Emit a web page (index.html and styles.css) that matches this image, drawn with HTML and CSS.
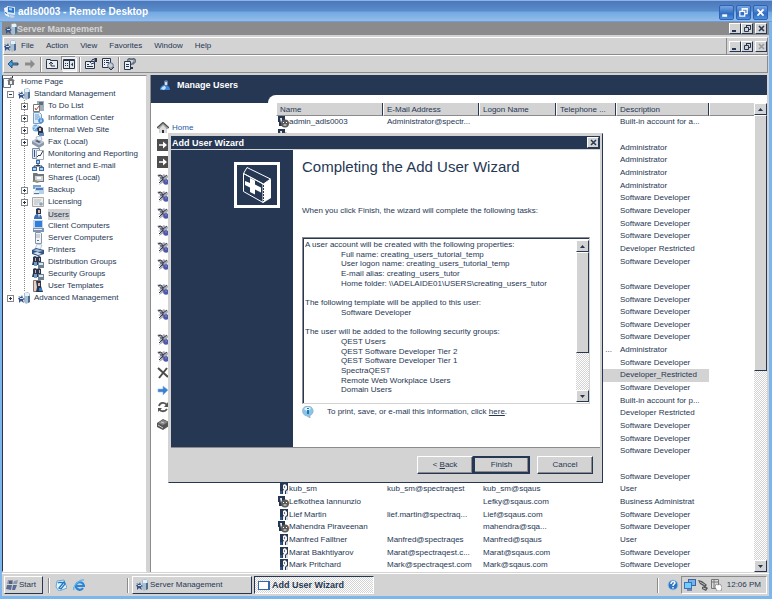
FILE: index.html
```html
<!DOCTYPE html>
<html lang="en">
<head>
<meta charset="utf-8">
<title>adls0003 - Remote Desktop</title>
<link rel="stylesheet" href="styles.css">
</head>
<body>
<svg class="defs" aria-hidden="true">
  <symbol id="server" viewBox="0 0 12 12"><path d="M6 1l4-1 2 2v8l-4 2-2-2z" fill="#a9bdd0"/><path d="M7 1h4v3H7z" fill="#e4f2fb"/><path d="M10 4h2v6l-2 1z" fill="#4f6f91"/><path d="M0 4l3 1 1-2 1 3 2 1-2 1 1 3-3-2-2 2V8L0 6l2-.5z" fill="#35548a"/><path d="M2 6h3v1H2z" fill="#d5e3f3"/></symbol>
  <symbol id="home" viewBox="0 0 12 12"><path d="M1 6l5-5 5 5v1H9.500v4h-7V7H1z" fill="#a5a5a5"/><path d="M0 6l6-5.500L12 6" fill="none" stroke="#4d4d4d" stroke-width="1.300"/><path d="M3 6l3-3 3 3v5H7V8H5v3H3z" fill="#ddd"/><path d="M5 8h2v3H5z" fill="#333"/></symbol>
  <symbol id="homepage" viewBox="0 0 12 12"><path d="M.5 2.500h7v9h-7z" fill="#fff" stroke="#68798c"/><path d="M4 5l4-4 4 4H11v4H5V5z" fill="#777"/><path d="M7 5h2v3H7z" fill="#eee"/><path d="M9 0h1v2H9z" fill="#263753"/></symbol>
  <symbol id="todo" viewBox="0 0 12 12"><path d="M5 1h7v10H5z" fill="#9fb0bc"/><path d="M7 2h4v3H7z" fill="#5d6f7d"/><path d="M1.500 4.500h6v7h-6z" fill="#fff" stroke="#777"/><path d="M3 8l1 2 3-4" fill="none" stroke="#b5443c"/></symbol>
  <symbol id="info-page" viewBox="0 0 12 12"><path d="M1.500.5h6l2 2v9h-8z" fill="#dcecfa" stroke="#7aa0c5"/><path d="M3 3h4M3 5h5M3 7h3" stroke="#6f9bc9"/><circle cx="9" cy="8.500" r="2.800" fill="#4b8ed6"/><path d="M8.500 8h1v2h-1zM8.500 6.500h1v1h-1z" fill="#fff"/></symbol>
  <symbol id="web" viewBox="0 0 12 12"><circle cx="4" cy="4" r="3.500" fill="#68a4de"/><path d="M1 3h6M2 6l4-5" stroke="#d5eafd"/><path d="M5 4l3-2 3 2v3l1 4H6V8z" fill="#263753"/><path d="M7 4h2v3H7z" fill="#e7c3a5"/><path d="M7 9h5v3H7z" fill="#5e87b8"/></symbol>
  <symbol id="fax" viewBox="0 0 12 12"><path d="M4 1l5-1 1 4-5 2z" fill="#eef3fb" stroke="#98a4b4" stroke-width=".7"/><path d="M0 5l4-2 8 3v3l-5 3-7-4z" fill="#8c97ab"/><path d="M0 5l4-2 8 3-5 3z" fill="#bfc8d6"/><path d="M3 5l4 2 2-1-4-2z" fill="#4c5974"/></symbol>
  <symbol id="chart" viewBox="0 0 12 12"><path d="M.5.500h7v10h-7z" fill="#dfe7f3" stroke="#7588a6"/><path d="M2 2h1v7H2z" fill="#31568f"/><path d="M4.500 2.500h7v9h-7z" fill="#fff" stroke="#a1a9b5"/><path d="M5 9l2-2 1 1 3-5" fill="none" stroke="#263753"/></symbol>
  <symbol id="network" viewBox="0 0 12 12"><path d="M4 0h4v4H4z" fill="#406aa7"/><path d="M5 1h2v2H5z" fill="#9fd0fa"/><path d="M6 4v2M2 8V6h8v2" fill="none" stroke="#263753"/><path d="M0 7h5v4H0zM7 7h5v4H7z" fill="#3d66a5"/><path d="M1 8h3v2H1zM8 8h3v2H8z" fill="#a6d5fb"/><path d="M4 5h4v1H4z" fill="#333"/></symbol>
  <symbol id="share" viewBox="0 0 12 12"><path d="M1 1h4l1 1h6v8H1z" fill="#70777d"/><path d="M3 4h8v5H3z" fill="#cfd3d5"/><path d="M0 9l4-1 4 2-3 1z" fill="#9b9185"/><path d="M5 5h4v2H5z" fill="#fff"/></symbol>
  <symbol id="backup" viewBox="0 0 12 12"><path d="M1 1h8v4H1z" fill="#7ca3cf"/><path d="M3 3h9v7H3z" fill="#b9d0e9"/><path d="M4 4h7v2H4z" fill="#4f7cb4"/><path d="M1 7h6v4H1z" fill="#e7eef6"/><path d="M2 9h5v1H2z" fill="#56739a"/></symbol>
  <symbol id="license" viewBox="0 0 12 12"><path d="M.5 1.500h11v9H.5z" fill="#ededed" stroke="#aaa"/><path d="M2 4h7M2 6h6M2 8h4" stroke="#b3bac2"/><circle cx="9" cy="8" r="1.800" fill="#8fa5b9"/></symbol>
  <symbol id="user" viewBox="0 0 12 12"><path d="M4 1l2-1 3 1v5H4z" fill="#263753"/><path d="M6 2h2v3H6z" fill="#e0b6a2"/><path d="M2 11c0-4 2-5 4-5s4 1 4 5z" fill="#3a6fb2"/><path d="M6 6h2l-1 4z" fill="#e5eef8"/></symbol>
  <symbol id="user-light" viewBox="0 0 12 12"><path d="M5 2l2-1 2 1v4H5z" fill="#5d7fb0"/><path d="M6 3h2v3H6z" fill="#f2d7c8"/><path d="M1 11c0-3 2-5 5-5s5 2 5 5z" fill="#3f88d8"/><path d="M2 10c1-2 2-3 4-3l1 2-2 2z" fill="#c5e2fb"/></symbol>
  <symbol id="pc" viewBox="0 0 12 12"><path d="M1 0h10v9H1z" fill="#c3d5ea"/><path d="M3 1h7v6H3z" fill="#2f7fdb"/><path d="M1 8h11v4H1z" fill="#8095b4"/><path d="M2 9h8v1H2z" fill="#edf1f5"/></symbol>
  <symbol id="tower" viewBox="0 0 12 12"><path d="M3.500.5h5l1 1v10h-6z" fill="#f2f5f7" stroke="#8795a2"/><path d="M4 3h4M4 5h4" stroke="#a4afba"/><path d="M5 8h2v1H5z" fill="#4f7192"/></symbol>
  <symbol id="printer" viewBox="0 0 12 12"><path d="M5 0l5 1-2 5-5-1z" fill="#eef5fd" stroke="#92a7bf" stroke-width=".6"/><path d="M0 6l4-2 8 2v4l-6 2-6-2z" fill="#33527f"/><path d="M1 6l4-1 6 2-5 1z" fill="#a8bfda"/><path d="M1 9l5 2 4-1-5-2z" fill="#d8e5f3"/></symbol>
  <symbol id="group" viewBox="0 0 12 12"><path d="M1 1l2-1 2 1 2-1 2 1v4l1 4H0l1-4z" fill="#263753"/><path d="M3 2h1v3H3zM7 2h1v3H7z" fill="#d7ad9b"/><path d="M2 6h3v4H2z" fill="#6f9bc6"/><path d="M6 6h6v6H6z" fill="#6e8193"/><path d="M7 7h4v2H7z" fill="#dbe6ee"/></symbol>
  <symbol id="template" viewBox="0 0 12 12"><path d="M1.500.500h7v11h-7z" fill="#e7cfc4" stroke="#8b6f6b"/><path d="M4 1h5v5l2 6H4l1-5z" fill="#263753"/><path d="M6 3h2v3H6z" fill="#e4b7a5"/><path d="M7 8h3v3H7z" fill="#407dbc"/></symbol>
  <symbol id="row-user" viewBox="0 0 12 12"><path d="M3 0h8v11H3z" fill="#263753"/><path d="M6 2l2-1 2 2v3L8 8v3H6V8l1-2H6z" fill="#f4f4f4"/><path d="M7 3h1v2H7z" fill="#777"/><path d="M9 8l2-1v4H9z" fill="#d5d9e0"/><path d="M3 8h2v3H3z" fill="#2e5c99"/></symbol>
  <symbol id="row-user-off" viewBox="0 0 12 12"><path d="M1 0h7v4L6 10H2V6H1z" fill="#263753"/><path d="M3 2h2v5H4z" fill="#e6e6e6"/><circle cx="8" cy="7.500" r="4" fill="#5a5a5a"/><path d="M6 6h1v1H6zM9 6h1v1H9zM6.500 8.500h3v1h-3z" fill="#fff"/></symbol>
  <symbol id="task" viewBox="0 0 12 12"><path d="M0 2l3-1 1 2 3-2 2 2 3-1-2 4 1 3H7l-5 3 2-4-3-1 3-1z" fill="#a9acb6"/><path d="M1 3l3-1 2 3 4-3M6 6l-4 4M3 5h3v3" fill="none" stroke="#343a4e"/><circle cx="9" cy="9" r="2.800" fill="#4e57a8"/><path d="M8.500 7.500h1v1h-1z" fill="#b7bdf0"/></symbol>
  <symbol id="go" viewBox="0 0 12 12"><path d="M0 0h12v12H0z" fill="#4d4d4d"/><path d="M2 5.200h4V2.500L10 6 6 9.500V6.800H2z" fill="#fff"/></symbol>
  <symbol id="delete" viewBox="0 0 12 12"><path d="M1 1l10 9M10 1L2 11" stroke="#4b4d48" stroke-width="2"/></symbol>
  <symbol id="move" viewBox="0 0 12 12"><path d="M1 5h5V2l5 4-5 5V8H1z" fill="#3b80cf" stroke="#8bb9ee" stroke-width=".6"/></symbol>
  <symbol id="refresh" viewBox="0 0 12 12"><path d="M2 5c1-4 6-4 8-1M10 8c-2 3-6 3-8 0" fill="none" stroke="#555" stroke-width="1.800"/><path d="M11 1v5H7zM1 11V7h4z" fill="#555"/></symbol>
  <symbol id="device" viewBox="0 0 12 12"><path d="M0 5l6-4 6 3v4l-6 4-6-3z" fill="#555"/><path d="M1 5l5-3 5 2-5 3z" fill="#8c8889"/><path d="M4 4l3 1M1 7l5 3" stroke="#ccc"/></symbol>
  <symbol id="remote" viewBox="0 0 12 12"><path d="M3 0l8 1v8l-8-1z" fill="#d7e6f5"/><path d="M4 1l6 1v5l-6-1z" fill="#2e74c9"/><path d="M5 2l3 .5v2L5 4z" fill="#9bd0fa"/><path d="M0 2l3-1v7l2 1v2L1 9z" fill="#eef5fc"/><path d="M6 9l5 1-2 2-4-1z" fill="#c5d4e4"/><path d="M1 6l2 1v1L1 7z" fill="#36537d"/></symbol>
  <symbol id="left" viewBox="0 0 12 12"><path d="M1 6l4-4v3h6v2H5v3z" fill="#36a0e8" stroke="#263753" stroke-width=".8"/></symbol>
  <symbol id="right" viewBox="0 0 12 12"><path d="M11 6L6.500 1.500v3H1v3h5.500v3z" fill="#8b8b8b"/></symbol>
  <symbol id="up-folder" viewBox="0 0 12 12"><path d="M.500 2.500v-1h4v1h7v8H.500z" fill="#ececec" stroke="#263753"/><path d="M3 6l2-2 2 2M5 4v4h4" fill="none" stroke="#263753"/></symbol>
  <symbol id="panes" viewBox="0 0 12 12"><path d="M.500 1.500h11v9H.500z" fill="#e7e7e7" stroke="#263753"/><path d="M1 2.500h10M6.500 2v8M2 5.500h1M4 5.500h1M2 7.500h1M4 7.500h1" stroke="#263753"/><path d="M8 6.500l2-2v4z" fill="#263753"/></symbol>
  <symbol id="props" viewBox="0 0 12 12"><path d="M.500 3.500h9v7h-9z" fill="#eee" stroke="#263753"/><path d="M2 6.500h2M2 8.500h6M5 5l3-4 3 2-2 2-3 1" fill="none" stroke="#263753"/><path d="M9 0h3v4h-1z" fill="#263753"/></symbol>
  <symbol id="export" viewBox="0 0 12 12"><path d="M.500.500h8v9h-8z" fill="#eee" stroke="#263753"/><path d="M2 2.500h1M4 2.500h3M2 4.500h1M4 4.500h3M2 6.500h1" stroke="#263753"/><circle cx="8.500" cy="7.500" r="2.800" fill="#ccc" stroke="#526d91"/><path d="M7 10l2 2 3-3" fill="none" stroke="#263753"/></symbol>
  <symbol id="help" viewBox="0 0 12 12"><path d="M.500 3.500h6v8h-6z" fill="#eee" stroke="#263753"/><path d="M2 6.500h3M2 8.500h3" stroke="#263753"/><path d="M4 3c0-3 7-3 7 0 0 2-3 2-3 4" fill="none" stroke="#263753" stroke-width="2"/><path d="M4 3c0-3 7-3 7 0 0 2-3 2-3 4" fill="none" stroke="#e6e6e6" stroke-width=".700"/><path d="M7 9h2v2H7z" fill="#263753"/></symbol>
  <symbol id="flag" viewBox="0 0 12 12"><path d="M2 1h5v4H1zM8 2l4-1-1 4H7z" fill="#8b98b5"/><path d="M1 6h5l-1 5-5-1zM7 6h4l-2 5H6z" fill="#596c94"/><path d="M3 2h3v3H3z" fill="#5c5f67"/></symbol>
  <symbol id="desk" viewBox="0 0 12 12"><path d="M2 2l7-1 3 8-8 3-3-4z" fill="#e2f4ff" stroke="#6aa6d5"/><path d="M3 4c2-2 4 1 6-1M4 9l5-6 1 2-4 5z" fill="none" stroke="#2279c2" stroke-width="1.300"/></symbol>
  <symbol id="ie" viewBox="0 0 12 12"><path d="M10 9c-2 3-7 2-7-2 0-5 7-5 8 0H4" fill="none" stroke="#2986d8" stroke-width="2.200"/><path d="M1 11C-1 7 7 0 11 1" fill="none" stroke="#61b4ee" stroke-width="1.300"/></symbol>
  <symbol id="help-ball" viewBox="0 0 12 12"><circle cx="6" cy="6" r="5" fill="#2f76c2" stroke="#a6c8ec"/><path d="M4 5c0-3 4-3 4-1 0 1-2 1-2 3M6 8v1.500" fill="none" stroke="#fff" stroke-width="1.400"/></symbol>
  <symbol id="screens" viewBox="0 0 12 12"><path d="M4 0h8v7H4z" fill="#46619b"/><path d="M5 1h6v5H5z" fill="#69b6f2"/><path d="M0 3h8v7H0z" fill="#3e71bc"/><path d="M1 4h6v5H1z" fill="#72cdfa"/><path d="M3 10h5v2H3z" fill="#7784a6"/></symbol>
  <symbol id="plug" viewBox="0 0 12 12"><path d="M1 1l4 1 5 4-2 2-5-3zM5 8l3-1 3 2-2 3-4-2z" fill="#555"/><path d="M3 3l5 3M6 9l3 1" stroke="#bbb"/></symbol>
  <symbol id="updates" viewBox="0 0 12 12"><path d="M1.500.500h7v9h-7z" fill="#ddd" stroke="#777"/><path d="M1 3h7M4 1v9" stroke="#777"/><path d="M6 5l2 1 2-1 2 3-1 4H7L5 8z" fill="#fff" stroke="#666" stroke-width=".600"/></symbol>
  <symbol id="balloon" viewBox="0 0 12 12"><path d="M6 0a5.500 5 0 0 1 2 9.500V12L5 10A5 5 0 0 1 6 0z" fill="#86c5ea" stroke="#9cabb9" stroke-width=".7"/><path d="M2 3c1-2 4-3 7-1L6 6z" fill="#e2f5ff"/><path d="M5 4h2v4H5zM5 2h2v1H5z" fill="#2373bd"/></symbol>
  <symbol id="kit" viewBox="0 0 36 36"><path d="M4.500 6.500L8 .500l23.500 11.500-7 5zM4.500 6.500v18L24 35.500V17z" fill="#263753" stroke="#fff"/><path d="M24 17l8-5v19l-8 5z" fill="#fff"/><path d="M24.500 18v16" stroke="#263753" stroke-dasharray="2 1"/><path d="M11 11l5 2.500v4l6 3v5l-6-3v5l-5-2.500v-4.500l-5-2.500v-4l5 2z" fill="#fff"/></symbol>
  <symbol id="min" viewBox="0 0 9 9"><path d="M1 6h4v2H1z" fill="currentColor"/></symbol>
  <symbol id="restore" viewBox="0 0 9 9"><path d="M3.500 3V1.500h4v4H6M1.500 3.500h4v4h-4z" fill="none" stroke="currentColor"/><path d="M3 1h5v1H3z" fill="currentColor"/></symbol>
  <symbol id="close" viewBox="0 0 9 9"><path d="M2 2l5 5M7 2L2 7" stroke="currentColor" stroke-width="1.500"/></symbol>
  <symbol id="tri-up" viewBox="0 0 9 9"><path d="M2 6l2.500-3L7 6z" fill="currentColor"/></symbol>
  <symbol id="tri-down" viewBox="0 0 9 9"><path d="M2 3h5L4.500 6z" fill="currentColor"/></symbol>
</svg>

<header class="rdp-title">
  <svg class="icon"><use href="#remote"/></svg><h1>adls0003 - Remote Desktop</h1>
  <button class="xp" aria-label="Minimize"><svg><use href="#min"/></svg></button><button class="xp" aria-label="Restore"><svg><use href="#restore"/></svg></button><button class="xp" aria-label="Close"><svg><use href="#close"/></svg></button>
</header>
<div class="session">
  <div class="app-title"><svg class="icon"><use href="#server"/></svg><h2>Server Management</h2>
    <button class="cap" aria-label="Minimize"><svg><use href="#min"/></svg></button><button class="cap" aria-label="Restore"><svg><use href="#restore"/></svg></button><button class="cap apart" aria-label="Close"><svg><use href="#close"/></svg></button>
  </div>
  <nav class="menubar"><svg class="icon"><use href="#server"/></svg>
    <button>File</button><button>Action</button><button>View</button><button>Favorites</button><button>Window</button><button>Help</button>
    <div class="child-caps"><button class="cap" aria-label="Minimize window"><svg><use href="#min"/></svg></button><button class="cap" aria-label="Restore window"><svg><use href="#restore"/></svg></button><button class="cap apart off" aria-label="Close window" disabled><svg><use href="#close"/></svg></button></div>
  </nav>
  <div class="toolbar">
    <button aria-label="Back"><svg class="icon"><use href="#left"/></svg></button><button aria-label="Forward"><svg class="icon"><use href="#right"/></svg></button><i></i>
    <button aria-label="Up one level"><svg class="icon"><use href="#up-folder"/></svg></button><button class="pressed" aria-label="Show tree"><svg class="icon"><use href="#panes"/></svg></button><i></i>
    <button aria-label="Properties"><svg class="icon"><use href="#props"/></svg></button><button aria-label="Export list"><svg class="icon"><use href="#export"/></svg></button><i></i>
    <button aria-label="Help"><svg class="icon"><use href="#help"/></svg></button>
  </div>

  <div class="workspace">
    <ul class="tree">
      <li class="root"><svg class="icon"><use href="#homepage"/></svg><span>Home Page</span></li>
      <li class="top"><b class="minus"></b><svg class="icon"><use href="#server"/></svg><span>Standard Management</span></li>
      <li><b></b><svg class="icon"><use href="#todo"/></svg><span>To Do List</span></li>
      <li><b></b><svg class="icon"><use href="#info-page"/></svg><span>Information Center</span></li>
      <li><b></b><svg class="icon"><use href="#web"/></svg><span>Internal Web Site</span></li>
      <li><b></b><svg class="icon"><use href="#fax"/></svg><span>Fax (Local)</span></li>
      <li class="leaf"><svg class="icon"><use href="#chart"/></svg><span>Monitoring and Reporting</span></li>
      <li class="leaf"><svg class="icon"><use href="#network"/></svg><span>Internet and E-mail</span></li>
      <li class="leaf"><svg class="icon"><use href="#share"/></svg><span>Shares (Local)</span></li>
      <li><b></b><svg class="icon"><use href="#backup"/></svg><span>Backup</span></li>
      <li><b></b><svg class="icon"><use href="#license"/></svg><span>Licensing</span></li>
      <li class="leaf"><svg class="icon"><use href="#user"/></svg><span class="current">Users</span></li>
      <li class="leaf"><svg class="icon"><use href="#pc"/></svg><span>Client Computers</span></li>
      <li class="leaf"><svg class="icon"><use href="#tower"/></svg><span>Server Computers</span></li>
      <li class="leaf"><svg class="icon"><use href="#printer"/></svg><span>Printers</span></li>
      <li class="leaf"><svg class="icon"><use href="#group"/></svg><span>Distribution Groups</span></li>
      <li class="leaf"><svg class="icon"><use href="#group"/></svg><span>Security Groups</span></li>
      <li class="leaf"><svg class="icon"><use href="#template"/></svg><span>User Templates</span></li>
      <li class="top"><b></b><svg class="icon"><use href="#server"/></svg><span>Advanced Management</span></li>
    </ul>

    <main class="users">
      <div class="banner"><svg class="icon"><use href="#user-light"/></svg><h2>Manage Users</h2></div>
      <div class="panel">
        <div class="actions">
          <a href="#"><svg class="icon"><use href="#home"/></svg>Home</a>
          <a href="#" aria-label="Action"><svg class="icon"><use href="#go"/></svg></a>
          <a href="#" aria-label="Action"><svg class="icon"><use href="#go"/></svg></a>
          <a href="#" aria-label="Task"><svg class="icon"><use href="#task"/></svg></a>
          <a href="#" aria-label="Task"><svg class="icon"><use href="#task"/></svg></a>
          <a href="#" aria-label="Task"><svg class="icon"><use href="#task"/></svg></a>
          <a href="#" aria-label="Task"><svg class="icon"><use href="#task"/></svg></a>
          <a href="#" aria-label="Task"><svg class="icon"><use href="#task"/></svg></a>
          <a href="#" class="tall" aria-label="Task"><svg class="icon"><use href="#task"/></svg></a>
          <a href="#" class="tall" aria-label="Task"><svg class="icon"><use href="#task"/></svg></a>
          <a href="#" class="tall" aria-label="Task"><svg class="icon"><use href="#task"/></svg></a>
          <a href="#" aria-label="Task"><svg class="icon"><use href="#task"/></svg></a>
          <a href="#" aria-label="Task"><svg class="icon"><use href="#task"/></svg></a>
          <a href="#" aria-label="Delete"><svg class="icon"><use href="#delete"/></svg></a>
          <a href="#" aria-label="Move"><svg class="icon"><use href="#move"/></svg></a>
          <a href="#" aria-label="Refresh"><svg class="icon"><use href="#refresh"/></svg></a>
          <a href="#" aria-label="Print"><svg class="icon"><use href="#device"/></svg></a>
        </div>
        <div class="list">
          <table>
            <colgroup><col class="c-name"><col class="c-mail"><col class="c-logon"><col class="c-phone"><col class="c-desc"><col></colgroup>
            <thead><tr><th>Name</th><th>E-Mail Address</th><th>Logon Name</th><th>Telephone ...</th><th>Description</th><th></th></tr></thead>
            <tbody>
              <tr><td><svg class="icon"><use href="#row-user-off"/></svg>admin_adls0003</td><td>Administrator@spectr...</td><td></td><td></td><td>Built-in account for a...</td><td></td></tr>
              <tr><td><svg class="icon"><use href="#row-user-off"/></svg></td><td></td><td></td><td></td><td></td><td></td></tr>
              <tr><td></td><td></td><td></td><td></td><td>Administrator</td><td></td></tr>
              <tr><td></td><td></td><td></td><td></td><td>Administrator</td><td></td></tr>
              <tr><td></td><td></td><td></td><td></td><td>Administrator</td><td></td></tr>
              <tr><td></td><td></td><td></td><td></td><td>Administrator</td><td></td></tr>
              <tr><td></td><td></td><td></td><td></td><td>Software Developer</td><td></td></tr>
              <tr><td></td><td></td><td></td><td></td><td>Software Developer</td><td></td></tr>
              <tr><td></td><td></td><td></td><td></td><td>Software Developer</td><td></td></tr>
              <tr><td></td><td></td><td></td><td></td><td>Software Developer</td><td></td></tr>
              <tr><td></td><td></td><td></td><td></td><td>Developer Restricted</td><td></td></tr>
              <tr><td></td><td></td><td></td><td></td><td>Software Developer</td><td></td></tr>
              <tr><td></td><td></td><td></td><td></td><td></td><td></td></tr>
              <tr><td></td><td></td><td></td><td></td><td>Software Developer</td><td></td></tr>
              <tr><td></td><td></td><td></td><td></td><td>Software Developer</td><td></td></tr>
              <tr><td></td><td></td><td></td><td></td><td>Software Developer</td><td></td></tr>
              <tr><td></td><td></td><td></td><td></td><td>Software Developer</td><td></td></tr>
              <tr><td></td><td></td><td></td><td></td><td>Software Developer</td><td></td></tr>
              <tr><td></td><td></td><td></td><td class="more">...</td><td>Administrator</td><td></td></tr>
              <tr><td></td><td></td><td></td><td></td><td>Software Developer</td><td></td></tr>
              <tr class="selected"><td></td><td></td><td></td><td></td><td>Developer_Restricted</td><td></td></tr>
              <tr><td></td><td></td><td></td><td></td><td>Software Developer</td><td></td></tr>
              <tr><td></td><td></td><td></td><td></td><td>Built-in account for p...</td><td></td></tr>
              <tr><td></td><td></td><td></td><td></td><td>Developer Restricted</td><td></td></tr>
              <tr><td></td><td></td><td></td><td></td><td>Software Developer</td><td></td></tr>
              <tr><td></td><td></td><td></td><td></td><td>Software Developer</td><td></td></tr>
              <tr><td></td><td></td><td></td><td></td><td>Software Developer</td><td></td></tr>
              <tr><td></td><td></td><td></td><td></td><td></td><td></td></tr>
              <tr><td></td><td></td><td></td><td></td><td>Software Developer</td><td></td></tr>
              <tr><td><svg class="icon"><use href="#row-user"/></svg>kub_sm</td><td>kub_sm@spectraqest</td><td>kub_sm@sqaus</td><td></td><td>User</td><td></td></tr>
              <tr><td><svg class="icon"><use href="#row-user-off"/></svg>Lefkothea Iannunzio</td><td></td><td>Lefky@sqaus.com</td><td></td><td>Business Administrat</td><td></td></tr>
              <tr><td><svg class="icon"><use href="#row-user"/></svg>Lief Martin</td><td>lief.martin@spectraq...</td><td>Lief@sqaus.com</td><td></td><td>Software Developer</td><td></td></tr>
              <tr><td><svg class="icon"><use href="#row-user-off"/></svg>Mahendra Piraveenan</td><td></td><td>mahendra@sqa...</td><td></td><td>Software Developer</td><td></td></tr>
              <tr><td><svg class="icon"><use href="#row-user"/></svg>Manfred Falltner</td><td>Manfred@spectraqes</td><td>Manfred@sqaus</td><td></td><td>User</td><td></td></tr>
              <tr><td><svg class="icon"><use href="#row-user"/></svg>Marat Bakhtiyarov</td><td>Marat@spectraqest.c...</td><td>Marat@sqaus.com</td><td></td><td>Software Developer</td><td></td></tr>
              <tr><td><svg class="icon"><use href="#row-user"/></svg>Mark Pritchard</td><td>Mark@spectraqest.com</td><td>Mark@sqaus.com</td><td></td><td>Software Developer</td><td></td></tr>
            </tbody>
          </table>
        </div>
        <div class="scroll"><button aria-label="Scroll up"><svg><use href="#tri-up"/></svg></button><div class="thumb"></div><div class="track"></div><button aria-label="Scroll down"><svg><use href="#tri-down"/></svg></button></div>
      </div>
    </main>
  </div>

  <footer class="taskbar">
    <button class="start"><svg class="icon"><use href="#flag"/></svg>Start</button><i></i>
    <button class="quick" aria-label="Show desktop"><svg class="icon"><use href="#desk"/></svg></button><button class="quick" aria-label="Internet Explorer"><svg class="icon"><use href="#ie"/></svg></button><i class="far"></i>
    <button class="task"><svg class="icon"><use href="#server"/></svg>Server Management</button>
    <button class="task active"><span class="window-glyph"></span>Add User Wizard</button>
    <i class="end"></i><svg class="icon"><use href="#help-ball"/></svg>
    <div class="tray"><svg class="icon"><use href="#screens"/></svg><svg class="icon"><use href="#plug"/></svg><svg class="icon"><use href="#updates"/></svg><time>12:06 PM</time></div>
  </footer>
</div>

<section class="dialog" role="dialog" aria-labelledby="wizard-name">
  <header><h2 id="wizard-name">Add User Wizard</h2><button class="cap" aria-label="Close wizard"><svg><use href="#close"/></svg></button></header>
  <div class="page">
    <div class="art"><svg><use href="#kit"/></svg></div>
    <div class="content">
      <h3>Completing the Add User Wizard</h3>
      <p>When you click Finish, the wizard will complete the following tasks:</p>
      <div class="summary">
        <div class="lines">
          <span>A user account will be created with the following properties:</span>
          <span class="sub">Full name: creating_users_tutorial_temp</span>
          <span class="sub">User logon name: creating_users_tutorial_temp</span>
          <span class="sub">E-mail alias: creating_users_tutor</span>
          <span class="sub">Home folder: \\ADELAIDE01\USERS\creating_users_tutor</span>
          <span></span>
          <span>The following template will be applied to this user:</span>
          <span class="sub">Software Developer</span>
          <span></span>
          <span>The user will be added to the following security groups:</span>
          <span class="sub">QEST Users</span>
          <span class="sub">QEST Software Developer Tier 2</span>
          <span class="sub">QEST Software Developer Tier 1</span>
          <span class="sub">SpectraQEST</span>
          <span class="sub">Remote Web Workplace Users</span>
          <span class="sub">Domain Users</span>
        </div>
        <div class="scroll"><button aria-label="Scroll summary up"><svg><use href="#tri-up"/></svg></button><div class="thumb"></div><div class="track"></div><button aria-label="Scroll summary down"><svg><use href="#tri-down"/></svg></button></div>
      </div>
      <div class="hint"><svg class="icon"><use href="#balloon"/></svg><span>To print, save, or e-mail this information, click <a href="#">here</a>.</span></div>
    </div>
  </div>
  <div class="buttons"><button>&lt; <u>B</u>ack</button><button class="default">Finish</button><button class="cancel">Cancel</button></div>
</section>
</body>
</html>
```
FILE: styles.css
```css
:root {
  --navy: #263753;
  --face: #d3d3d3;
  --shade: #8b8b8d;
  --checker: repeating-conic-gradient(#fff 0 25%, #d3d3d3 0 50%) 0 0 / 2px 2px;
}
* { box-sizing: border-box; }
html, body { height: 100%; }
body {
  margin: 0;
  display: flex;
  flex-direction: column;
  overflow: hidden;
  position: relative;
  background: #7db6ec;
  color: var(--navy);
  font: 8px/12px "Liberation Sans", sans-serif;
}
button { font: inherit; color: inherit; border: 0; padding: 0; margin: 0; background: none; }
h1, h2, h3, p, ul { margin: 0; padding: 0; }
h1, h2 { font-size: 9px; line-height: 12px; font-weight: bold; }
.defs { position: absolute; width: 0; height: 0; }
.icon { width: 12px; height: 12px; flex: none; display: block; }

/* Outer window */
.rdp-title {
  height: 22px;
  flex: none;
  display: flex;
  align-items: center;
  gap: 2px;
  padding: 2px 4px 0 4px;
  background: linear-gradient(#8db5ec 0 1px, #4c78ba 1px, #5a8ccb 50%, #72a9e2 55%, #94bce9 21px, #6c9dd9 21px);
  color: #fff;
}
.rdp-title h1 { flex: 1; font-size: 10px; }
.xp {
  width: 15px;
  height: 15px;
  display: grid;
  place-items: center;
  border: 1px solid #2e62b4;
  border-radius: 2px;
  background: linear-gradient(#77a5e2, #2f6cc0 60%, #4e90dc);
}
.xp svg { width: 11px; height: 11px; }
.session {
  flex: 1;
  min-height: 0;
  display: flex;
  flex-direction: column;
  margin: 0 3px 3px 2px;
  background: var(--face);
}

/* Console caption and menus */
.app-title {
  flex: none;
  height: 13px;
  display: flex;
  align-items: center;
  padding: 0 2px 0 3px;
  background: var(--shade);
  color: #d6d6d6;
}
.app-title h2 { flex: 1; }
.cap {
  width: 12px;
  height: 11px;
  display: grid;
  place-items: center;
  color: var(--navy);
  background: var(--face);
  border: 1px solid;
  border-color: #fff var(--navy) var(--navy) #fff;
}
.cap svg { width: 9px; height: 9px; }
.cap.apart { margin-left: 2px; }
.cap.off { color: #999; }
.menubar, .toolbar {
  flex: none;
  display: flex;
  align-items: center;
  margin: 0 1px;
  border: 1px solid;
  border-color: #fff var(--shade) var(--shade) #fff;
}
.menubar { height: 18px; margin-top: 2px; gap: 12px; }
.menubar .icon { margin-right: -7px; }
.child-caps {
  align-self: stretch;
  display: flex;
  align-items: center;
  margin-left: auto;
  padding-left: 2px;
  border-left: 1px solid var(--shade);
}
.toolbar { height: 18px; padding-left: 2px; gap: 3px; }
.toolbar button { height: 14px; width: 14px; display: grid; place-items: center; }
.toolbar button.pressed { background: #eee; box-shadow: -1px -1px var(--shade), 1px 1px #fff; }
.toolbar i { width: 2px; height: 15px; border-left: 1px solid var(--shade); border-right: 1px solid #fff; }

/* Workspace */
.workspace { flex: 1; min-height: 0; display: flex; margin-top: 2px; gap: 3px; }
.tree {
  flex: none;
  width: 145px;
  background: #fff;
  list-style: none;
  border: 1px solid;
  border-color: var(--shade) var(--face) #fff var(--navy);
  white-space: nowrap;
}
.tree li {
  height: 12px;
  display: flex;
  align-items: center;
  gap: 4px;
  padding-left: 18px;
  background:
    repeating-linear-gradient(#888 0 1px, transparent 1px 2px) 7px 0 / 1px 100% no-repeat,
    repeating-linear-gradient(#888 0 1px, transparent 1px 2px) 21px 0 / 1px 100% no-repeat;
}
.tree li.root { padding-left: 0; background: none; }
.tree li.root span { padding-left: 2px; }
.tree li.top { padding-left: 4px; background: none; }
.tree li.leaf { padding-left: 29px; }
.tree span { padding: 0 1px 0 0; }
.tree .current { background: var(--face); line-height: 11px; }
.tree b {
  width: 7px;
  height: 7px;
  border: 1px solid #888;
  background:
    linear-gradient(var(--navy), var(--navy)) center / 3px 1px no-repeat,
    linear-gradient(var(--navy), var(--navy)) center / 1px 3px no-repeat, #fff;
}
.tree b.minus { background: linear-gradient(var(--navy), var(--navy)) center / 3px 1px no-repeat, #fff; }

.users { flex: 1; min-width: 0; display: flex; flex-direction: column; background: #fff; border-left: 1px solid var(--shade); margin-right: 2px; }
.banner {
  flex: none;
  height: 28px;
  display: flex;
  align-items: center;
  gap: 6px;
  padding: 0 0 8px 8px;
  background: var(--navy);
  color: #fff;
}
.panel { flex: 1; min-height: 0; display: flex; position: relative; }
.panel::before {
  content: "";
  position: absolute;
  top: -8px;
  left: 117px;
  right: 0;
  height: 8px;
  background: #fff;
  border-top-left-radius: 8px;
}
.actions { flex: none; width: 125px; padding: 16px 0 0 6px; }
.actions a { height: 17px; display: flex; align-items: center; gap: 3px; color: #2457a4; text-decoration: none; }
.actions a.tall { height: 25px; align-items: flex-start; padding-top: 3px; }
.list { flex: 1; min-width: 0; }
table { width: 100%; height: 100%; table-layout: fixed; border-collapse: separate; border-spacing: 0; white-space: nowrap; }
.c-name { width: 107px; } .c-mail { width: 96px; } .c-logon { width: 77px; } .c-phone { width: 60px; } .c-desc { width: 93px; }
th {
  height: 13px;
  padding: 0 0 0 3px;
  text-align: left;
  font-weight: normal;
  line-height: 11px;
  background: var(--face);
  border-right: 1px solid var(--navy);
  border-bottom: 1px solid var(--shade);
  border-left: 1px solid #fff;
}
th:last-child { border-right: 0; }
td { height: 12px; padding: 0 0 0 4px; line-height: 12px; overflow: hidden; }
td:first-child { padding-left: 1px; }
td .icon { float: left; }
td.more { text-align: right; padding-right: 4px; }
.selected td:nth-child(-n+5) { background: var(--face); }

.scroll { flex: none; width: 13px; display: flex; flex-direction: column; }
.scroll button, .thumb {
  flex: none;
  display: grid;
  place-items: center;
  height: 12px;
  background: var(--face);
  border: 1px solid;
  border-color: #fff var(--navy) var(--navy) #fff;
}
.scroll svg { width: 9px; height: 9px; }
.panel .thumb { flex: 62; }
.track { flex: 46; background: var(--checker); }

/* Taskbar */
.taskbar {
  flex: none;
  height: 23px;
  display: flex;
  align-items: center;
  gap: 2px;
  margin-top: 1px;
  padding: 0 2px;
  border-top: 1px solid #fff;
}
.taskbar > button, .tray { height: 18px; display: flex; align-items: center; }
.start, .task { border: 1px solid; border-color: #fff var(--navy) var(--navy) #fff; }
.start { width: 39px; padding-left: 1px; gap: 1px; }
.taskbar i { width: 2px; height: 15px; margin: 0 3px; border-left: 1px solid var(--shade); border-right: 1px solid #fff; }
.quick { margin-right: 4px; }
.taskbar i.far { margin: 0 1px 0 36px; }
.taskbar i.end { margin: 0 6px 0 auto; }
.task { width: 120px; padding-left: 3px; gap: 2px; }
.task.active {
  background: var(--checker);
  border-color: var(--navy) #fff #fff var(--navy);
  font-size: 9px;
  font-weight: bold;
}
.window-glyph { width: 12px; height: 9px; background: #fff; border: 1px solid #3568ab; border-right-width: 2px; }
.tray { gap: 1px; padding: 0 5px 0 2px; border: 1px solid; border-color: var(--shade) #fff #fff var(--shade); }
.tray time { margin-left: 4px; }

/* Wizard */
.dialog {
  position: absolute;
  left: 168px;
  top: 133px;
  width: 435px;
  padding: 2px;
  background: var(--face);
  border: 1px solid;
  border-color: var(--face) var(--navy) var(--navy) var(--face);
}
.dialog header { height: 13px; display: flex; align-items: center; padding: 0 1px; background: var(--navy); color: #fff; }
.dialog header h2 { flex: 1; }
.page { display: flex; height: 298px; margin-top: 1px; border-bottom: 1px solid var(--shade); background: #fff; }
.art { flex: none; width: 122px; padding: 12px 13px; background: var(--navy); }
.art svg { display: block; width: 46px; height: 46px; margin-left: auto; padding: 2px; border: 3px solid #fff; }
.content { flex: 1; min-width: 0; display: flex; flex-direction: column; padding: 6px 10px 29px 9px; }
.content h3 { font-size: 15px; line-height: 22px; font-weight: normal; }
.content p { margin: 27px 0 20px; }
.summary { flex: 1; min-height: 0; display: flex; border: 1px solid; border-color: var(--shade) var(--face) var(--face) var(--shade); box-shadow: inset 1px 1px var(--navy); padding: 2px 0 1px 2px; }
.lines { flex: 1; min-width: 0; display: grid; grid-auto-rows: 1fr; padding-bottom: 7px; overflow: hidden; white-space: nowrap; }
.lines span { line-height: 9px; height: 9px; }
.lines .sub { padding-left: 36px; }
.summary .thumb { flex: 100; }
.summary .track { flex: 38; }
.hint { display: flex; align-items: center; gap: 13px; padding-top: 2px; }
.hint a { color: inherit; }
.buttons { height: 32px; display: flex; justify-content: flex-end; align-items: center; padding: 1px 7px 0 0; }
.buttons button {
  width: 56px;
  height: 18px;
  border: 1px solid;
  border-color: #fff var(--navy) var(--navy) #fff;
  box-shadow: inset -1px -1px var(--shade);
}
.buttons .default { width: 57px; border: 2px solid var(--navy); }
.buttons .cancel { margin-left: 7px; }
```
